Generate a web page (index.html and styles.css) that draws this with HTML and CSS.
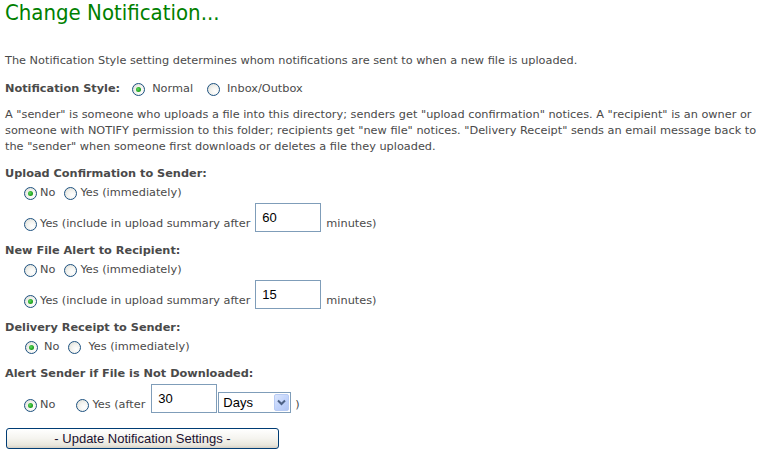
FILE: index.html
```html
<!DOCTYPE html>
<html>
<head>
<meta charset="utf-8">
<title>Change Notification</title>
<link rel="stylesheet" href="styles.css">
</head>
<body>
<div class="page">
  <h1 class="title">Change Notification...</h1>

  <p class="intro">The Notification Style setting determines whom notifications are sent to when a new file is uploaded.</p>

  <div class="style-row">
    <span class="lbl">Notification Style:</span>
    <input type="radio" class="radio r-normal" name="style" checked>
    <span class="txt">Normal</span>
    <input type="radio" class="radio r-inbox" name="style">
    <span class="txt">Inbox/Outbox</span>
  </div>

  <p class="desc">A "sender" is someone who uploads a file into this directory; senders get "upload confirmation" notices. A "recipient" is an owner or<br>someone with NOTIFY permission to this folder; recipients get "new file" notices. "Delivery Receipt" sends an email message back to<br>the "sender" when someone first downloads or deletes a file they uploaded.</p>

  <section class="group">
    <div class="lbl">Upload Confirmation to Sender:</div>
    <div class="opts">
      <input type="radio" class="radio" name="up" checked><span class="txt">No</span>
      <input type="radio" class="radio r-second" name="up"><span class="txt">Yes (immediately)</span>
    </div>
    <div class="opts delay">
      <input type="radio" class="radio" name="up"><span class="txt">Yes (include in upload summary after</span>
      <input type="text" class="box" value="60"><span class="txt after">minutes)</span>
    </div>
  </section>

  <section class="group">
    <div class="lbl">New File Alert to Recipient:</div>
    <div class="opts">
      <input type="radio" class="radio" name="nf"><span class="txt">No</span>
      <input type="radio" class="radio r-second" name="nf"><span class="txt">Yes (immediately)</span>
    </div>
    <div class="opts delay">
      <input type="radio" class="radio" name="nf" checked><span class="txt">Yes (include in upload summary after</span>
      <input type="text" class="box" value="15"><span class="txt after">minutes)</span>
    </div>
  </section>

  <section class="group">
    <div class="lbl">Delivery Receipt to Sender:</div>
    <div class="opts spaced">
      <input type="radio" class="radio" name="dr" checked><span class="txt">No</span>
      <input type="radio" class="radio r-second" name="dr"><span class="txt">Yes (immediately)</span>
    </div>
  </section>

  <section class="group">
    <div class="lbl">Alert Sender if File is Not Downloaded:</div>
    <div class="opts delay alert">
      <input type="radio" class="radio" name="al" checked><span class="txt">No</span>
      <input type="radio" class="radio r-yes" name="al"><span class="txt">Yes (after</span>
      <input type="text" class="box" value="30">
      <span class="sel">
        <select class="sel-input"><option>Days</option><option>Hours</option></select>
        <span class="sel-btn"><svg width="9" height="7" viewBox="0 0 9 7"><path d="M1 1.5 L4.5 5 L8 1.5" fill="none" stroke="#4d6185" stroke-width="2"/></svg></span>
      </span>
      <span class="txt paren">)</span>
    </div>
  </section>

  <button class="submit" type="button">- Update Notification Settings -</button>
</div>
</body>
</html>
```

FILE: styles.css
```css
html, body {
  margin: 0;
  padding: 0;
  background: #ffffff;
}

body {
  font-family: "DejaVu Sans", sans-serif;
  font-size: 11.3px;
  line-height: 16px;
  color: #4a4a4a;
}

.page {
  padding: 0 5px;
}

.title {
  margin: 0;
  font-family: "DejaVu Sans Condensed", "DejaVu Sans", sans-serif;
  font-stretch: semi-condensed;
  font-weight: normal;
  font-size: 22px;
  line-height: 26px;
  color: #008000;
}

.intro {
  margin: 27px 0 0;
}

.style-row {
  margin-top: 12px;
  display: flex;
  align-items: center;
  height: 16px;
}

.lbl {
  font-weight: bold;
}

.desc {
  margin: 10px 0 0;
  white-space: nowrap;
}

.group {
  margin-top: 11px;
}

.group .lbl {
  height: 16px;
}

.opts {
  display: flex;
  align-items: center;
  height: 16px;
  margin-top: 3px;
  padding-left: 19px;
}

.opts.delay {
  align-items: flex-end;
  height: 29px;
  margin-top: 2px;
}

.opts.delay .radio {
  margin-bottom: 1px;
}

.radio {
  appearance: none;
  -webkit-appearance: none;
  box-sizing: border-box;
  width: 13px;
  height: 13px;
  margin: 0 3px 0 0;
  border: 1px solid #1c5180;
  border-radius: 50%;
  background: radial-gradient(circle at 65% 65%, #ffffff 0%, #f3f3ef 45%, #d8d8d0 100%);
  flex: none;
  position: relative;
}

.radio:checked::after {
  content: "";
  position: absolute;
  left: 3px;
  top: 3px;
  width: 5px;
  height: 5px;
  border-radius: 50%;
  background: radial-gradient(circle at 40% 40%, #5fdc5f 0%, #21a121 60%, #1b8a1b 100%);
}

.txt {
  white-space: nowrap;
}

.r-second {
  margin-left: 9px;
}

.opts.spaced .radio:first-child {
  margin-left: 1px;
  margin-right: 6px;
}

.opts.spaced .r-second {
  margin-left: 9px;
  margin-right: 7px;
}

.r-yes {
  margin-left: 21px;
}

.style-row .r-normal {
  margin-left: 12px;
  margin-right: 7px;
}

.style-row .r-inbox {
  margin-left: 14px;
  margin-right: 7px;
}

.box {
  box-sizing: border-box;
  width: 66px;
  height: 29px;
  margin: 0 0 0 5px;
  padding: 0 6px;
  border: 1px solid #7f9db9;
  background: #fff;
  font-family: "Liberation Sans", Arial, sans-serif;
  font-size: 13px;
  color: #000;
  outline: none;
}

.alert .box {
  margin-left: 6px;
}

.after {
  margin-left: 5px;
}

.sel {
  position: relative;
  display: inline-block;
  width: 73px;
  height: 21px;
  margin-left: 1px;
  flex: none;
}

.sel-input {
  appearance: none;
  -webkit-appearance: none;
  box-sizing: border-box;
  width: 73px;
  height: 21px;
  margin: 0;
  padding: 0 0 0 4px;
  border: 1px solid #7f9db9;
  border-radius: 0;
  background: #fff;
  font-family: "Liberation Sans", Arial, sans-serif;
  font-size: 13px;
  color: #000;
  outline: none;
}

.sel-btn {
  position: absolute;
  right: 2px;
  top: 2px;
  width: 15px;
  height: 17px;
  box-sizing: border-box;
  border: 1px solid #b8cbf4;
  border-radius: 2px;
  background: linear-gradient(135deg, #dbe6fd 0%, #c1d3fb 55%, #b2c6f5 100%);
  display: flex;
  align-items: center;
  justify-content: center;
  pointer-events: none;
}

.paren {
  margin-left: 4px;
}

.submit {
  display: block;
  box-sizing: border-box;
  width: 273px;
  height: 21px;
  margin: 15px 0 0 1px;
  padding: 0;
  border: 1px solid #003c74;
  border-radius: 3px;
  background: linear-gradient(180deg, #ffffff 0%, #f5f4ef 50%, #e8e6dc 85%, #d6d0c5 100%);
  font-family: "Liberation Sans", Arial, sans-serif;
  font-size: 13px;
  color: #1a1030;
  cursor: pointer;
}
```
